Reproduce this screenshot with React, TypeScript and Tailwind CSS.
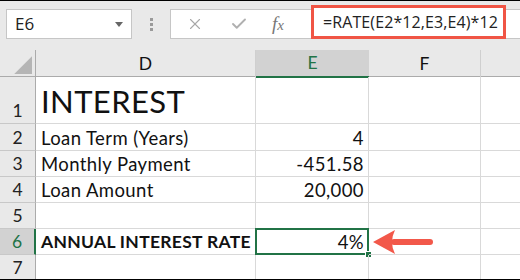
import { X, Check } from "lucide-react";

const rows = [
  { n: "1", h: "h-[47px]", d: "INTEREST", e: "", big: true },
  { n: "2", h: "h-[27px]", d: "Loan Term (Years)", e: "4" },
  { n: "3", h: "h-[26px]", d: "Monthly Payment", e: "-451.58" },
  { n: "4", h: "h-[26px]", d: "Loan Amount", e: "20,000" },
  { n: "5", h: "h-[26px]", d: "", e: "" },
  { n: "6", h: "h-[26px]", d: "ANNUAL INTEREST RATE", e: "4%", sel: true },
  { n: "7", h: "h-[26px]", d: "", e: "" },
];

function Arrow() {
  return (
    <svg className="absolute left-[3px] top-[0px] pointer-events-none" width="64" height="28" viewBox="0 0 64 28">
      <path d="M22 13 L58 13" stroke="#f2584a" strokeWidth="6" strokeLinecap="round" />
      <path d="M1 13 L23 1 Q17 13 23 25 Z" fill="#f2584a" />
    </svg>
  );
}

export default function App() {
  return (
    <div className="w-[520px] h-[280px] overflow-hidden bg-white border-y border-black font-['Lato',sans-serif] text-[#111]">
      {/* formula bar */}
      <div className="h-[49px] bg-[#e9e9e9] flex items-start pt-[8px] pl-[6px]">
        <div className="w-[126px] h-[30px] bg-white border border-[#c6c6c6] flex items-center pl-[8px] pr-[8px] justify-between">
          <span className="text-[17px] font-['Open_Sans',sans-serif] text-[#222]">E6</span>
          <span className="w-0 h-0 border-l-[4px] border-r-[4px] border-t-[5px] border-l-transparent border-r-transparent border-t-[#666]" />
        </div>
        <div className="w-[38px] h-[30px] flex flex-col items-center justify-center gap-[2px]">
          <span className="w-[3px] h-[3px] bg-[#9a9a9a]" />
          <span className="w-[3px] h-[3px] bg-[#9a9a9a]" />
          <span className="w-[3px] h-[3px] bg-[#9a9a9a]" />
        </div>
        <div className="flex-1 h-[30px] bg-white border border-[#c6c6c6] border-r-0 flex items-center relative">
          <X className="ml-[15px] text-[#a8a8a8]" size={18} strokeWidth={1.5} />
          <Check className="ml-[26px] text-[#b0b0b0]" size={18} strokeWidth={2.5} />
          <span className="ml-[24px] font-['Liberation_Serif',serif] italic text-[19px] text-[#777]">
            f<span className="text-[15px]">x</span>
          </span>
          <div className="absolute left-[140px] top-[-5px] w-[195px] h-[34px] border-[3px] border-[#f05545] bg-white flex items-center pl-[9px]">
            <span className="font-['Open_Sans',sans-serif] text-[16px] text-[#222] tracking-[0.1px]">=RATE(E2*12,E3,E4)*12</span>
          </div>
        </div>
      </div>

      {/* column headers */}
      <div className="grid grid-cols-[36px_220px_113px_112px_1fr] h-[27px] bg-[#e9e9e9] border-b border-[#ababab] text-[17.5px]">
        <div className="border-r border-[#ababab] flex items-end justify-end pr-[3px] pb-[3px]">
          <span className="w-[18px] h-[18px] bg-[#b5b5b5] [clip-path:polygon(100%_0,100%_100%,0_100%)]" />
        </div>
        <div className="border-r border-[#cfcfcf] flex items-center justify-center">D</div>
        <div className="bg-[#d2d2d2] border-b-2 border-[#217346] -mb-px flex items-center justify-center text-[#217346]">E</div>
        <div className="border-r border-[#cfcfcf] flex items-center justify-center">F</div>
        <div />
      </div>

      {/* rows */}
      {rows.map((r) => (
        <div key={r.n} className={`grid grid-cols-[36px_220px_113px_112px_1fr] ${r.h} text-[18.5px] leading-[22px]`}>
          <div
            className={`flex items-end justify-center pb-[1px] border-b text-[17.5px] ${
              r.sel
                ? "bg-[#d2d2d2] text-[#217346] border-b-[#c8c8c8] border-r-2 border-r-[#217346]"
                : "bg-[#e9e9e9] text-[#222] border-b-[#c8c8c8] border-r border-r-[#ababab]"
            }`}
          >
            {r.n}
          </div>
          <div
            className={`flex items-end pl-[5px] border-r border-b border-[#d9d9d9] whitespace-nowrap ${
              r.big ? "text-[31px] leading-[44px]" : "pb-[1px]"
            } ${r.sel ? "font-bold text-[17.5px] tracking-[0.3px]" : "tracking-[0.4px]"}`}
          >
            {r.d}
          </div>
          <div className="relative flex items-end justify-end pr-[4px] pb-[1px] border-r border-b border-[#d9d9d9] tracking-[0.4px]">
            {r.e}
            {r.sel && (
              <>
                <span className="absolute -left-px -top-px -right-px -bottom-px border-2 border-[#217346] pointer-events-none" />
                <span className="absolute -right-[4px] -bottom-[4px] w-[7px] h-[7px] bg-[#217346] border border-white" />
              </>
            )}
          </div>
          <div className="relative border-r border-b border-[#d9d9d9]">{r.sel && <Arrow />}</div>
          <div className="border-b border-[#d9d9d9]" />
        </div>
      ))}
    </div>
  );
}
